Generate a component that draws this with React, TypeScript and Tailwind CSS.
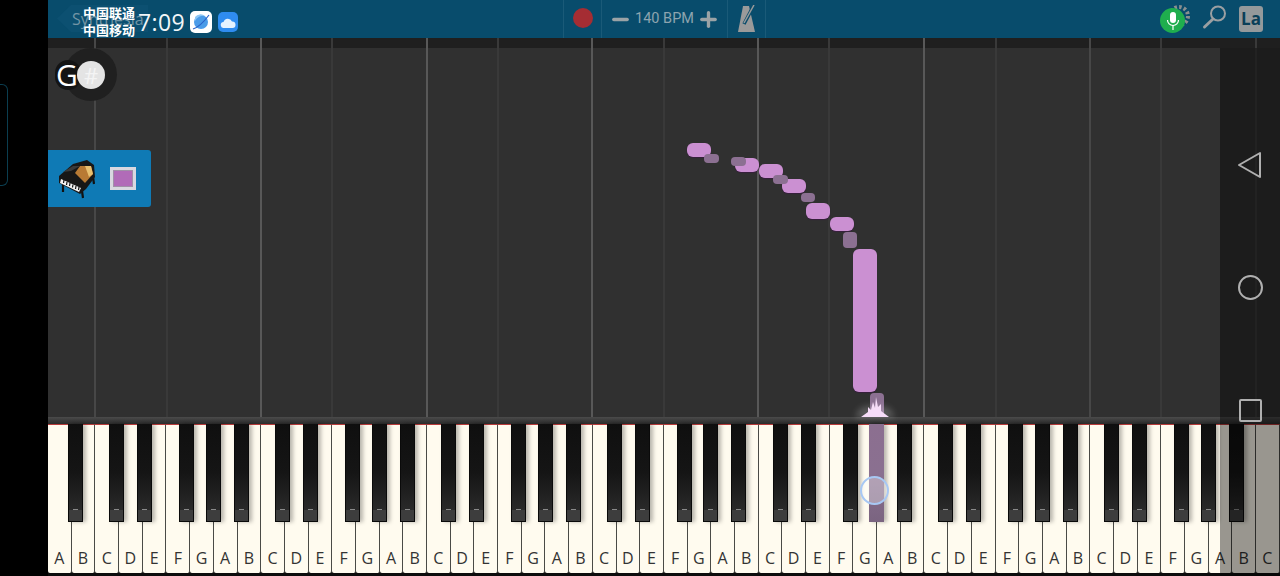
import { Plus, Minus } from "lucide-react";

const LETTERS = ["A", "B", "C", "D", "E", "F", "G"];
const whiteKeys = Array.from({ length: 52 }, (_, i) => LETTERS[i % 7]);

// left edge of each black key, measured from the keyboard's left side
const OCTAVE = 165.8;
const firstC = 47.4;
const offsets = [13.9, 41.9, 83.9, 110.6, 138.6];
const blackKeys: number[] = [19.6];
for (let o = 0; o < 7; o++) {
  offsets.forEach((x) => blackKeys.push(firstC + o * OCTAVE + x));
}
const HELD_KEY = 822;

const brightLines = [212, 378, 543, 709, 875];
const dimLines = [46, 1041];
const minorLines = [118, 283, 449, 615, 780, 947, 1112, 1207];

const bigNotes = [
  { x: 639, y: 95, w: 24, h: 14 },
  { x: 687, y: 110, w: 24, h: 14 },
  { x: 711, y: 116, w: 24, h: 14 },
  { x: 734, y: 131, w: 24, h: 14 },
  { x: 758, y: 155, w: 24, h: 16 },
  { x: 782, y: 169, w: 24, h: 14 },
  { x: 805, y: 201, w: 24, h: 143 },
];
const smallNotes = [
  { x: 656, y: 106, w: 15, h: 9 },
  { x: 683, y: 109, w: 15, h: 9 },
  { x: 725, y: 127, w: 15, h: 9 },
  { x: 753, y: 145, w: 14, h: 9 },
  { x: 795, y: 184, w: 14, h: 16 },
  { x: 822, y: 345, w: 14, h: 24 },
];

function PianoIcon() {
  return (
    <svg width="40" height="40" viewBox="0 0 40 40">
      <path d="M5 24 L5 33 M24 32 L25 39 M35 18 L36 25" stroke="#111" strokeWidth="2.2" />
      <path d="M1 17 L15 5 L29 1 L36 6 L37 18 L28 30 L22 35 L1 24 Z" fill="#171717" />
      <path d="M22 7 L33 7 L35 15 L27 24 L17 14 Z" fill="#b87a34" />
      <path d="M27 7 L33 7 L35 15 L31 18 Z" fill="#e8c070" />
      <path d="M5 13 L15 7 L22 7 L13 12 Z" fill="#3a3a3a" />
      <path d="M3 20 L23 29 L21 33 L2 24 Z" fill="#f2f2f2" />
      <path d="M6 21 L5.5 24 M9 23 L8.5 26 M12 24 L11.5 27 M15 25.5 L14.5 28.5 M18 27 L17.5 30 M21 28 L20.5 31" stroke="#111" strokeWidth="1.2" />
    </svg>
  );
}

function Metronome() {
  return (
    <svg width="18" height="28" viewBox="0 0 18 28">
      <path d="M5 1 L11 1 L17 27 L0 27 Z" fill="#9a9a9a" />
      <path d="M6 19 L16 0" stroke="#084c6c" strokeWidth="3.5" />
      <path d="M6 18 L16 0" stroke="#9a9a9a" strokeWidth="1.5" />
    </svg>
  );
}

function BrowserIcon() {
  return (
    <div className="w-[22px] h-[22px] rounded-[5px] bg-white flex items-center justify-center">
      <svg width="18" height="18" viewBox="0 0 18 18">
        <circle cx="9" cy="9" r="7" fill="#4a9be8" />
        <path d="M3 4 A7 7 0 0 1 13 3 A9 9 0 0 0 3 8 Z" fill="#8cc6f5" />
        <path d="M1 16 Q8 14 17 2" stroke="#2a62c8" strokeWidth="1.2" fill="none" />
      </svg>
    </div>
  );
}

function CloudIcon() {
  return (
    <div className="w-5 h-5 rounded-[5px] bg-[#2f8cf0] flex items-center justify-center">
      <svg width="16" height="11" viewBox="0 0 16 11">
        <path d="M4 11 A3 3 0 0 1 3.5 5 A4.5 4.5 0 0 1 12 4.5 A3.2 3.2 0 0 1 12.5 11 Z" fill="#e6f2ff" />
      </svg>
    </div>
  );
}

function MicBadge() {
  return (
    <div className="relative w-[43px] h-[38px]">
      <svg className="absolute left-[7px] top-[4px]" width="24" height="24" viewBox="0 0 24 24">
        <circle cx="12" cy="12" r="9" fill="none" stroke="#8a8f8f" strokeWidth="4" strokeDasharray="2.5 2.2" />
      </svg>
      <div className="absolute left-0 top-[8px] w-[25px] h-[25px] rounded-full bg-[#1fae4e] flex items-center justify-center">
        <svg width="14" height="18" viewBox="0 0 14 18">
          <rect x="4" y="0" width="6" height="11" rx="3" fill="#fff" />
          <path d="M1.5 8 A5.5 5.5 0 0 0 12.5 8" stroke="#fff" strokeWidth="1.2" fill="none" />
          <path d="M7 13 L7 18" stroke="#fff" strokeWidth="1.2" />
        </svg>
      </div>
    </div>
  );
}

function TopBar() {
  return (
    <div className="relative h-[38px] shrink-0 bg-[#084c6c] flex items-center">
      {/* back button sits behind the phone's status text */}
      <div className="absolute left-[9px] top-[5px] w-[91px] h-[27px] flex items-center pl-[15px] text-[16px] text-[#7395a5] bg-[#0c5071] [clip-path:polygon(14px_0,100%_0,100%_100%,14px_100%,0_50%)] whitespace-nowrap">
        Synthesia
      </div>
      <div className="relative ml-[35px] mt-[4px] flex flex-col text-[13px] leading-[17px] font-bold text-white w-[55px]" style={{ fontFamily: "'Noto Sans CJK SC', sans-serif" }}>
        <span>中国联通</span>
        <span>中国移动</span>
      </div>
      <span className="relative mt-[6px] text-[23px] text-[#f2f6f8] tracking-[0.4px] leading-none">7:09</span>
      <div className="relative ml-[5px] mt-[6px] flex items-center gap-[6px]">
        <BrowserIcon />
        <CloudIcon />
      </div>
      <div className="absolute left-[515px] top-0 h-[38px] flex items-center">
        <div className="w-[39px] h-full flex items-center justify-center border-x border-[#1a5a78]">
          <div className="w-5 h-5 rounded-full bg-[#a52d33] mb-[2px]" />
        </div>
        <div className="w-[125px] h-full flex items-center justify-center text-[#8da4af] text-[14.5px] gap-[3px]" style={{ fontFamily: "Roboto, sans-serif" }}>
          <Minus size={23} strokeWidth={3.5} color="#9ba3a6" />
          <span>140 BPM</span>
          <Plus size={23} strokeWidth={3.5} color="#9ba3a6" />
        </div>
        <div className="w-[39px] h-full flex items-center justify-center border-x border-[#1a5a78]">
          <Metronome />
        </div>
      </div>
      <div className="ml-auto flex items-center pr-[17px]">
        <MicBadge />
        <svg className="mb-[4px] ml-[-1px]" width="26" height="26" viewBox="0 0 26 26">
          <circle cx="16" cy="9.5" r="7" fill="none" stroke="#9a9fa2" strokeWidth="2" />
          <path d="M11 15 L2.5 23" stroke="#9a9fa2" strokeWidth="3" strokeLinecap="round" />
        </svg>
        <div className="ml-[11px] mt-[-1px] w-[24px] h-[26px] rounded-[3px] bg-[#94999b] flex items-center justify-center text-[17px] font-bold text-[#0a3f58]">
          La
        </div>
      </div>
    </div>
  );
}

function NoteRoll() {
  return (
    <div className="relative flex-1 bg-[#303030]">
      {brightLines.map((x) => (
        <div key={x} className="absolute top-[-10px] bottom-0 w-0.5 bg-[#585858]" style={{ left: x }} />
      ))}
      {dimLines.map((x) => (
        <div key={x} className="absolute top-[-10px] bottom-0 w-0.5 bg-[#474747]" style={{ left: x }} />
      ))}
      {minorLines.map((x) => (
        <div key={x} className="absolute top-[-10px] bottom-0 w-0.5 bg-[#393939]" style={{ left: x }} />
      ))}
      {bigNotes.map((n) => (
        <div key={n.x} className="absolute rounded-[6px] bg-[#cb90d2] shadow-[0_1px_1px_rgba(60,20,70,0.6)]" style={{ left: n.x, top: n.y, width: n.w, height: n.h }} />
      ))}
      {smallNotes.map((n) => (
        <div key={n.x} className="absolute rounded-[4px] bg-[#8c7092]" style={{ left: n.x, top: n.y, width: n.w, height: n.h }} />
      ))}
      {/* spark where the held note lands */}
      <div className="absolute left-[808px] top-[358px] w-[38px] h-[12px] rounded-t-full bg-white/20 blur-[3px]" />
      <svg className="absolute left-[813px] top-[349px]" width="28" height="20" viewBox="0 0 28 20">
        <path d="M0 20 L7 15 L7 10 L10 13 L12 5 L14 11 L15 0 L17 10 L20 7 L20 14 L28 20 Z" fill="#f6dcf8" />
      </svg>

      <div className="absolute left-[16px] top-0 w-[53px] h-[53px] rounded-full bg-[#202020]" />
      <div className="absolute left-[7px] top-[12px] w-[26px] h-[30px] rounded-full bg-[#141414]" />
      <span className="absolute left-[8px] top-[7px] text-[30px] text-white leading-[40px]">G</span>
      <div className="absolute left-[29px] top-[13px] w-7 h-7 rounded-full bg-[#e4e4e4] flex items-center justify-center text-[22px] text-[#f4f4f4] leading-none">
        #
      </div>

      <div className="absolute left-0 top-[102px] w-[103px] h-[57px] rounded-r-[3px] bg-[#0f7ab5] flex items-center pl-[10px]">
        <PianoIcon />
        <div className="ml-[12px] w-[26px] h-[23px] bg-[#d8d8e0] flex items-center justify-center">
          <div className="w-[20px] h-[17px] bg-[#b16bb8] border border-[#a090a8]" />
        </div>
      </div>
    </div>
  );
}

function Keyboard() {
  return (
    <div className="shrink-0">
      <div className="h-[7px] bg-gradient-to-b from-[#4a4a4a] to-[#2c2c2c]" />
      <div className="relative h-[152px] bg-[#0c0c0c]">
        <div className="flex h-[149px]">
          {whiteKeys.map((letter, i) => (
            <div
              key={i}
              className="flex-1 flex items-end justify-center pb-[4px] rounded-b-[2px] bg-[#fffbef] border-t border-t-[#b83a3a] border-r border-r-[#4a4a46] text-[16px] leading-[22px] text-[#333]"
            >
              {letter}
            </div>
          ))}
        </div>
        {blackKeys.map((x) => {
          const held = Math.abs(x - HELD_KEY) < 2;
          return (
            <div
              key={x}
              className={
                "absolute top-0 w-[15px] h-[98px] shadow-[3px_0_4px_rgba(0,0,0,0.28)] " +
                (held
                  ? "bg-gradient-to-b from-[#8c6f90] via-[#8a7090] to-[#7a6480]"
                  : "bg-gradient-to-b from-[#0f0f0f] via-[#151515] to-[#303030] border-x border-b border-[#0a0a0a]")
              }
              style={{ left: x }}
            >
              {!held && (
                <>
                  <div className="absolute bottom-0 left-0 right-0 h-[11px] bg-[#3d3d3d]" />
                  <div className="absolute bottom-[11px] left-[4px] right-[4px] h-px bg-[#8a8a8a]" />
                </>
              )}
            </div>
          );
        })}
        <div className="absolute left-[812px] top-[52px] w-[29px] h-[29px] rounded-full border-2 border-[#a8c8f4] bg-white/35" />
      </div>
    </div>
  );
}

function NavBar() {
  return (
    <div className="absolute right-0 top-[48px] bottom-0 w-[60px] bg-black/40 flex flex-col items-center">
      <svg className="mt-[103px]" width="26" height="28" viewBox="0 0 26 28">
        <path d="M2 14 L23 2 L23 26 Z" fill="none" stroke="#b0b0b0" strokeWidth="2" strokeLinejoin="round" />
      </svg>
      <div className="mt-[96px] w-[25px] h-[25px] rounded-full border-2 border-[#b0b0b0]" />
      <div className="mt-[99px] w-[23px] h-[23px] rounded-[2px] border-2 border-[#b0b0b0]" />
    </div>
  );
}

export default function App() {
  return (
    <div className="flex h-[576px] w-[1280px] bg-black overflow-hidden" style={{ fontFamily: "'Open Sans', sans-serif" }}>
      <div className="relative w-12 shrink-0">
        <div className="absolute left-0 top-[84px] w-2 h-[102px] rounded-r-[6px] border border-l-0 border-[#0b3e50]" />
      </div>
      <div className="relative flex-1 flex flex-col">
        <TopBar />
        <div className="h-[10px] shrink-0 bg-[#1f1f1f]" />
        <NoteRoll />
        <Keyboard />
        <NavBar />
      </div>
    </div>
  );
}
